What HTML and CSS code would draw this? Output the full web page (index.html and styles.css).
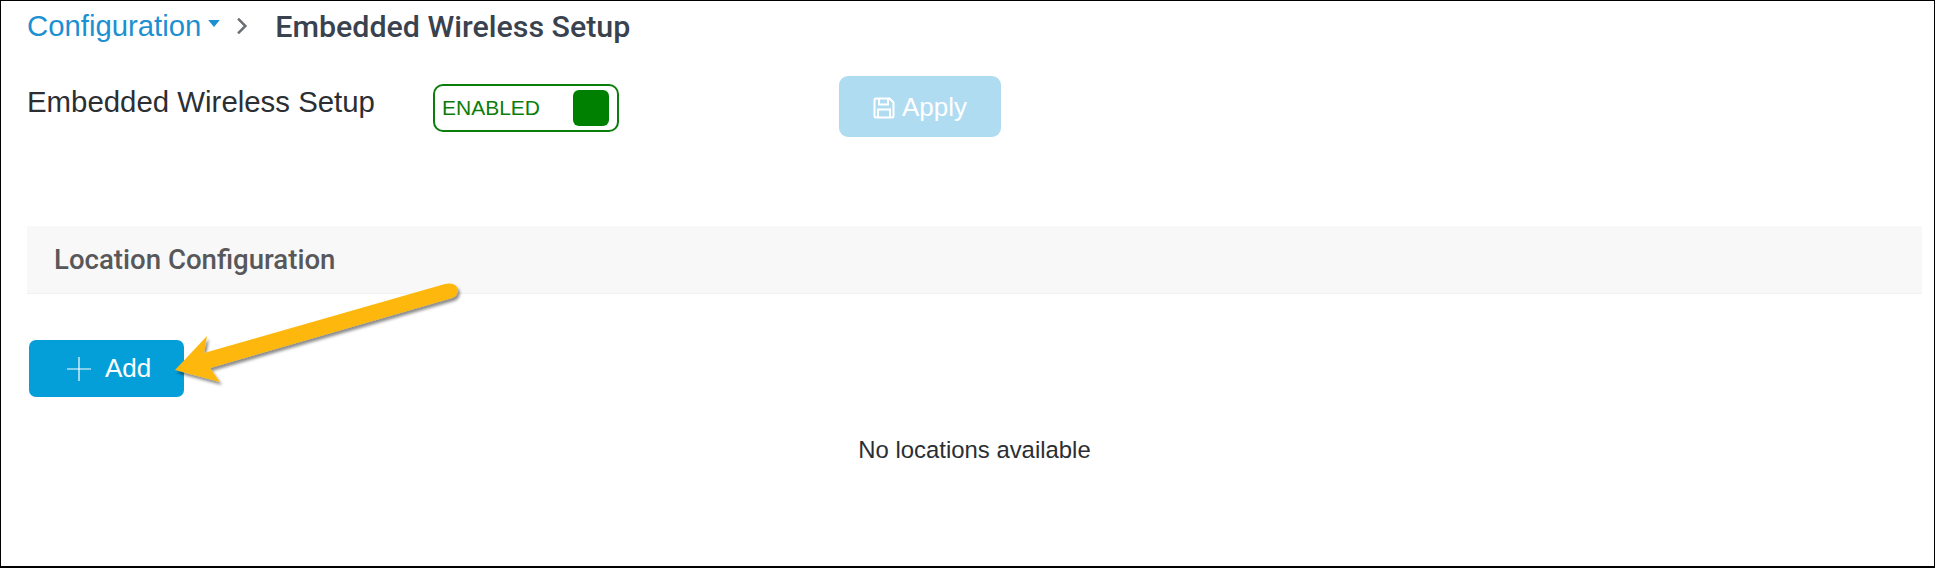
FILE: index.html
```html
<!DOCTYPE html>
<html lang="en">
<head>
  <meta charset="UTF-8"/>
  <title>Embedded Wireless Setup</title>
  <link rel="stylesheet" href="styles.css">
</head>
<body>

<div class="frame">

  <!-- Breadcrumb -->
  <div class="crumbs">
    <a class="crumb-link">Configuration</a>
    <svg class="crumb-caret" viewBox="0 0 10 6"><path d="M0 0h10L5 6z"/></svg>
    <svg class="crumb-sep" viewBox="0 0 10 16"><path d="M1.5 1.5 8 8l-6.5 6.5"/></svg>
    <span class="crumb-current">Embedded Wireless Setup</span>
  </div>

  <!-- Setup row -->
  <div class="setup-row">
    <label class="setup-label">Embedded Wireless Setup</label>
    <div class="toggle">
      <span class="toggle-text">ENABLED</span>
      <span class="toggle-knob"></span>
    </div>
    <button class="btn-apply">
      <svg class="save-icon" viewBox="0 0 22 22">
        <path d="M1.5 3a1.5 1.5 0 0 1 1.5-1.5h13.5l4 4V19a1.5 1.5 0 0 1-1.5 1.5H3A1.5 1.5 0 0 1 1.5 19z"/>
        <path d="M6 1.5v6h9v-6M5 20.5v-8h12v8"/>
      </svg>
      Apply
    </button>
  </div>

  <!-- Location section -->
  <div class="section-bar">Location Configuration</div>

  <button class="btn-add">
    <svg class="plus-icon" viewBox="0 0 24 24"><path d="M12 0v24M0 12h24"/></svg>
    Add
  </button>

  <p class="empty">No locations available</p>

  <!-- Callout arrow -->
  <svg class="callout" viewBox="0 0 320 120" width="320" height="120">
    <defs>
      <filter id="arrowShadow" x="-10%" y="-20%" width="125%" height="150%">
        <feDropShadow dx="2" dy="3" stdDeviation="1.5" flood-color="#000" flood-opacity=".45"/>
      </filter>
    </defs>
    <path class="callout-head" filter="url(#arrowShadow)" d="M15 89 47 55 44 72 285 3Q295 1 298 8 298 15 292 17L50 87 60 101z"/>
  </svg>

</div>

</body>
</html>
```

FILE: styles.css
```css
html, body {
  margin: 0; padding: 0; background: #fff;
}
.frame {
  position: relative;
  box-sizing: border-box;
  width: 1935px;
  height: 568px;
  border: 1px solid #000;
  border-width: 1px 1px 2px 1px;
  padding: 0 12px 0 26px;
  font-family: "Liberation Sans", Arial, sans-serif;
  overflow: hidden;
}

.crumbs {
  display: flex;
  align-items: center;
  height: 50px;
}
.crumb-link {
  font-size: 29.3px;
  color: #1d90d2;
}
.crumb-caret {
  width: 12px;
  height: 7px;
  margin: 0 0 6px 7px;
  fill: #1d90d2;
}
.crumb-sep {
  width: 12px;
  height: 18px;
  margin: 0 27px 0 16px;
  fill: none;
  stroke: #6b6f73;
  stroke-width: 2.2;
}
.crumb-current {
  font-family: Roboto, sans-serif;
  font-weight: 500;
  font-size: 30.4px;
  color: #39424e;
}

.setup-row {
  display: flex;
  align-items: flex-start;
  margin-top: 25px;
}
.setup-label {
  width: 406px;
  margin-top: 8px;
  font-size: 29.4px;
  line-height: 36px;
  color: #2b2f33;
}
.toggle {
  box-sizing: border-box;
  display: flex;
  align-items: center;
  justify-content: space-between;
  width: 186px;
  height: 48px;
  margin-top: 8px;
  padding: 0 8px 0 7px;
  border: 2px solid #0a7d0a;
  border-radius: 10px;
  background: #fff;
}
.toggle-text {
  font-size: 21px;
  color: #0a7d0a;
}
.toggle-knob {
  width: 36px;
  height: 36px;
  border-radius: 6px;
  background: #008000;
}
.btn-apply {
  display: flex;
  align-items: center;
  justify-content: center;
  gap: 7px;
  width: 162px;
  height: 61px;
  margin-left: 220px;
  padding: 2px 0 0;
  border: none;
  border-radius: 9px;
  background: #b0dcf2;
  color: #fff;
  font-family: "Liberation Sans", Arial, sans-serif;
  font-size: 26px;
}
.save-icon {
  width: 22px;
  height: 22px;
  fill: none;
  stroke: #fff;
  stroke-width: 2;
}

.section-bar {
  box-sizing: border-box;
  height: 68px;
  margin-top: 89px;
  padding: 0 27px;
  background: #f8f8f8;
  border-bottom: 1px solid #f1f1f1;
  font-family: Roboto, sans-serif;
  font-weight: 500;
  font-size: 27.6px;
  line-height: 67px;
  color: #58585b;
}

.btn-add {
  display: flex;
  align-items: center;
  gap: 14px;
  box-sizing: border-box;
  width: 155px;
  height: 57px;
  margin: 46px 0 0 2px;
  padding: 0 0 0 38px;
  border: none;
  border-radius: 7px;
  background: #049fd9;
  color: #fff;
  font-family: "Liberation Sans", Arial, sans-serif;
  font-size: 26px;
}
.plus-icon {
  width: 24px;
  height: 24px;
  fill: none;
  stroke: #fff;
  stroke-width: 1.2;
}

.empty {
  margin: 39px 0 0;
  text-align: center;
  font-size: 23.9px;
  color: #2b2f33;
}

.callout {
  position: absolute;
  left: 159px;
  top: 280px;
  overflow: visible;
}
.callout-head {
  fill: #fdb70a;
}
```
